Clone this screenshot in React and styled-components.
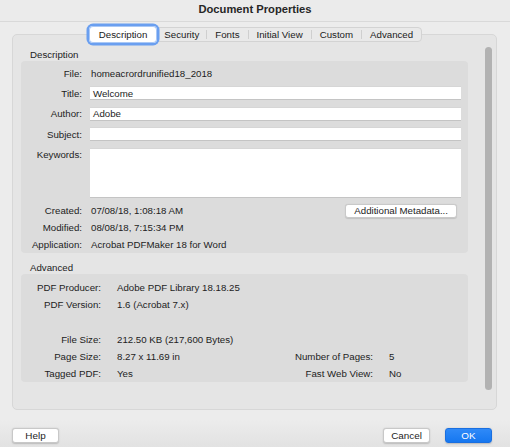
import React from 'react';
import styled, { createGlobalStyle } from 'styled-components';

const Global = createGlobalStyle`
  html, body { margin: 0; padding: 0; background: #ececec; }
  body {
    font-family: "Liberation Sans", Arial, sans-serif;
    font-size: 9.7px;
    color: #1c1c1c;
  }
  * { box-sizing: border-box; }
`;

const Window = styled.div`
  width: 510px;
  height: 447px;
  display: flex;
  flex-direction: column;
  background: linear-gradient(#ececec 0, #ececec 420px, #e2e2e2 447px);
  overflow: hidden;
`;

const TitleBar = styled.div`
  flex: none;
  height: 22px;
  padding-bottom: 3px;
  display: flex;
  align-items: center;
  justify-content: center;
  font-weight: bold;
  font-size: 11.2px;
  color: #262626;
  background: #ebebeb;
  border-bottom: 1px solid #d9d9d9;
`;

const Body = styled.div`
  flex: none;
  display: flex;
  flex-direction: column;
  padding: 5px 13px 0 12px;
`;

const TabStrip = styled.div`
  position: relative;
  z-index: 1;
  align-self: center;
  margin-left: 1px;
  display: flex;
  align-items: center;
  height: 15px;
  background: #e9e9e9;
  border: 1px solid #d3d3d3;
  border-radius: 4px;
`;

const Tab = styled.div`
  height: ${p => (p.$active ? '17px' : '13px')};
  display: flex;
  align-items: center;
  padding: 0 ${p => p.$pad || 8}px;
  border-radius: 4px;
  color: #1a1a1a;
  background: ${p => (p.$active ? '#ffffff' : 'transparent')};
  box-shadow: ${p => (p.$active ? '0 0 0 2.5px #6a9ff0, inset 0 0 0 1px #a9c8f6' : 'none')};
`;

const Sep = styled.div`
  width: 1px;
  height: 9px;
  background: #cfcfcf;
`;

const TabBox = styled.div`
  margin-top: -8px;
  height: 376px;
  display: flex;
  align-items: flex-start;
  background: #e5e5e5;
  border: 1px solid #d7d7d7;
  border-radius: 5px;
`;

const Content = styled.div`
  width: 456px;
  padding: 14px 0 0 8px;
  display: flex;
  flex-direction: column;
`;

const Scrollbar = styled.div`
  margin: 12px 0 0 16px;
  width: 7px;
  height: 343px;
  border-radius: 4px;
  background: #b2b2b2;
`;

const SectionTitle = styled.div`
  height: 12px;
  line-height: 12px;
  padding-left: 9px;
  margin-top: ${p => p.$mt || 0}px;
`;

const Group = styled.div`
  width: 447px;
  height: ${p => p.$h}px;
  background: #dcdcdc;
  border-radius: 4px;
  padding: ${p => p.$pt}px 7px 0 0;
  display: flex;
  flex-direction: column;
`;

const Row = styled.div`
  display: flex;
  align-items: ${p => (p.$top ? 'flex-start' : 'center')};
  height: ${p => p.$h}px;
  margin-top: ${p => p.$mt || 0}px;
  flex: none;
`;

const Label = styled.div`
  width: 61px;
  flex: none;
  text-align: right;
  padding-top: ${p => (p.$top ? 1 : 0)}px;
  color: #222;
`;

const Value = styled.div`
  margin-left: 9px;
  white-space: nowrap;
`;

const Field = styled.div`
  margin-left: 8px;
  flex: 1;
  height: 100%;
  background: #ffffff;
  border-top: 1px solid #d6d6d6;
  border-bottom: 1px solid #c4c4c4;
  padding-left: 3px;
  display: flex;
  align-items: ${p => (p.$multi ? 'flex-start' : 'center')};
`;

const SmallButton = styled.div`
  margin-left: auto;
  margin-right: 4px;
  height: 14px;
  padding: 0 8px;
  display: flex;
  align-items: center;
  background: #ffffff;
  border: 1px solid #c9c9c9;
  border-radius: 3px;
  box-shadow: 0 0.5px 1px rgba(0,0,0,0.12);
`;

const InfoGrid = styled.div`
  display: grid;
  grid-template-columns: 80px 1fr 100px 72px;
  grid-template-rows: 17px 17px 18px 17px 17px 17px;
  column-gap: 16px;
  align-items: center;
`;

const GLabel = styled.div`
  text-align: right;
  grid-column: ${p => p.$col};
  grid-row: ${p => p.$row};
  color: #222;
`;

const GValue = styled.div`
  grid-column: ${p => p.$col};
  grid-row: ${p => p.$row};
  white-space: nowrap;
`;

const Footer = styled.div`
  flex: none;
  margin-top: 18px;
  display: flex;
  align-items: center;
  padding: 0 18px 0 12px;
`;

const Button = styled.div`
  width: 47px;
  height: 15px;
  display: flex;
  align-items: center;
  justify-content: center;
  border-radius: 3px;
  margin-left: ${p => p.$ml || 0};
  font-size: 9.9px;
  color: ${p => (p.$primary ? '#ffffff' : '#1c1c1c')};
  background: ${p => (p.$primary ? 'linear-gradient(#2f8af8, #1677f0)' : '#ffffff')};
  border: 1px solid ${p => (p.$primary ? '#1a6fe0' : '#c8c8c8')};
  box-shadow: 0 0.5px 1.5px rgba(0,0,0,0.18);
`;

export default function App() {
  return (
    <>
      <Global />
      <Window>
        <TitleBar>Document Properties</TitleBar>
        <Body>
          <TabStrip>
            <Tab $active $pad={10}>Description</Tab>
            <Tab $pad={7}>Security</Tab>
            <Sep />
            <Tab>Fonts</Tab>
            <Sep />
            <Tab>Initial View</Tab>
            <Sep />
            <Tab>Custom</Tab>
            <Sep />
            <Tab>Advanced</Tab>
          </TabStrip>
          <TabBox>
            <Content>
              <SectionTitle>Description</SectionTitle>
              <Group $h={192} $pt={6}>
                <Row $h={13}>
                  <Label>File:</Label>
                  <Value>homeacrordrunified18_2018</Value>
                </Row>
                <Row $h={14} $mt={6}>
                  <Label>Title:</Label>
                  <Field>Welcome</Field>
                </Row>
                <Row $h={14} $mt={6.5}>
                  <Label>Author:</Label>
                  <Field>Adobe</Field>
                </Row>
                <Row $h={14} $mt={6.5}>
                  <Label>Subject:</Label>
                  <Field />
                </Row>
                <Row $h={50} $mt={6.5} $top>
                  <Label $top>Keywords:</Label>
                  <Field $multi />
                </Row>
                <Row $h={14} $mt={6}>
                  <Label>Created:</Label>
                  <Value>07/08/18, 1:08:18 AM</Value>
                  <SmallButton>Additional Metadata...</SmallButton>
                </Row>
                <Row $h={13} $mt={3.5}>
                  <Label>Modified:</Label>
                  <Value>08/08/18, 7:15:34 PM</Value>
                </Row>
                <Row $h={13} $mt={4}>
                  <Label>Application:</Label>
                  <Value>Acrobat PDFMaker 18 for Word</Value>
                </Row>
              </Group>
              <SectionTitle $mt={9}>Advanced</SectionTitle>
              <Group $h={108} $pt={4.5}>
                <InfoGrid>
                  <GLabel $col={1} $row={1}>PDF Producer:</GLabel>
                  <GValue $col={2} $row={1}>Adobe PDF Library 18.18.25</GValue>
                  <GLabel $col={1} $row={2}>PDF Version:</GLabel>
                  <GValue $col={2} $row={2}>1.6 (Acrobat 7.x)</GValue>
                  <GLabel $col={1} $row={4}>File Size:</GLabel>
                  <GValue $col={2} $row={4}>212.50 KB (217,600 Bytes)</GValue>
                  <GLabel $col={1} $row={5}>Page Size:</GLabel>
                  <GValue $col={2} $row={5}>8.27 x 11.69 in</GValue>
                  <GLabel $col={3} $row={5}>Number of Pages:</GLabel>
                  <GValue $col={4} $row={5}>5</GValue>
                  <GLabel $col={1} $row={6}>Tagged PDF:</GLabel>
                  <GValue $col={2} $row={6}>Yes</GValue>
                  <GLabel $col={3} $row={6}>Fast Web View:</GLabel>
                  <GValue $col={4} $row={6}>No</GValue>
                </InfoGrid>
              </Group>
            </Content>
            <Scrollbar />
          </TabBox>
        </Body>
        <Footer>
          <Button>Help</Button>
          <Button $ml="auto">Cancel</Button>
          <Button $primary $ml="15px">OK</Button>
        </Footer>
      </Window>
    </>
  );
}
